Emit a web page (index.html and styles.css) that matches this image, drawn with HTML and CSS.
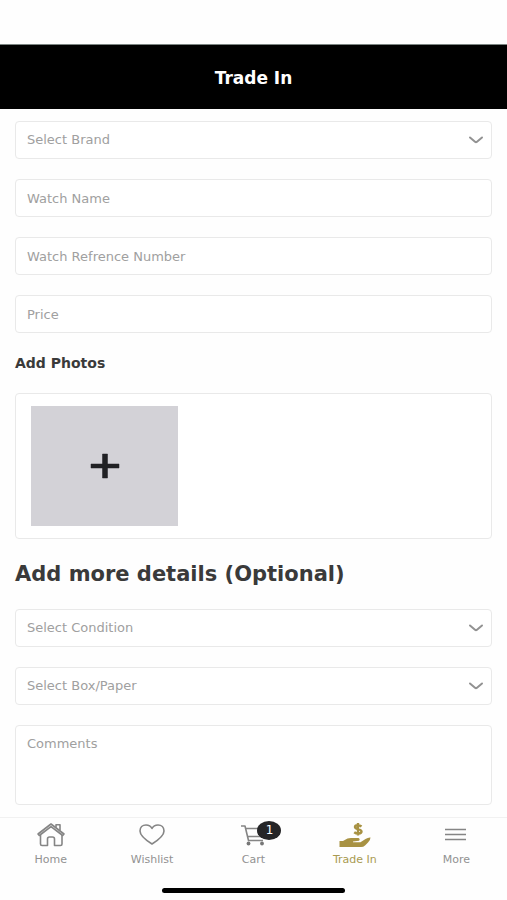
FILE: index.html
```html
<!DOCTYPE html>
<html lang="en">
<head>
<meta charset="utf-8">
<meta name="viewport" content="width=device-width, initial-scale=1">
<title>Trade In</title>
<link rel="stylesheet" href="styles.css">
</head>
<body>
<div class="app">
  <header class="header"><h1 class="header-title">Trade In</h1></header>
  <main class="content">
    <form class="form">
      <div class="group">
        <div class="select-wrap">
          <select class="field" aria-label="Select Brand"><option>Select Brand</option></select>
          <svg class="chevron" viewBox="0 0 16 8" aria-hidden="true"><path d="M2 1.500 L7 5.700 Q8 6.500 9 5.700 L14 1.500"/></svg>
        </div>
        <input class="field" type="text" placeholder="Watch Name" aria-label="Watch Name">
        <input class="field" type="text" placeholder="Watch Refrence Number" aria-label="Watch Refrence Number">
        <input class="field" type="text" placeholder="Price" aria-label="Price">
      </div>
      <h2 class="photos-title">Add Photos</h2>
      <div class="photos">
        <button class="add-photo" type="button" aria-label="Add photo">
          <svg class="plus" viewBox="0 0 30 26" aria-hidden="true"><path class="plus-bar" d="M1 11H29V15H1Z"/><path class="plus-stem" d="M12.500 1H17.500V25H12.500Z"/></svg>
        </button>
      </div>
      <h2 class="details-title">Add more details (Optional)</h2>
      <div class="group">
        <div class="select-wrap">
          <select class="field" aria-label="Select Condition"><option>Select Condition</option></select>
          <svg class="chevron" viewBox="0 0 16 8" aria-hidden="true"><path d="M2 1.500 L7 5.700 Q8 6.500 9 5.700 L14 1.500"/></svg>
        </div>
        <div class="select-wrap">
          <select class="field" aria-label="Select Box/Paper"><option>Select Box/Paper</option></select>
          <svg class="chevron" viewBox="0 0 16 8" aria-hidden="true"><path d="M2 1.500 L7 5.700 Q8 6.500 9 5.700 L14 1.500"/></svg>
        </div>
        <textarea class="field comments" placeholder="Comments" aria-label="Comments"></textarea>
      </div>
    </form>
  </main>
  <footer class="footer">
    <nav class="tabs">
      <a class="tab" href="#home">
        <svg class="icon" viewBox="0 0 32 26" aria-hidden="true"><path d="M3 12 L16 2 L29 12 L27.700 13.500 L16 4.600 L4.300 13.500 Z"/><path d="M5.500 13V22Q5.500 23.500 7 23.500H12.500V17Q12.500 15 14.500 15H17.500Q19.500 15 19.500 17V23.500H25.500Q27 23.500 27 22V13M21 5.500V2.700H25V8.600"/></svg>
        <span>Home</span>
      </a>
      <a class="tab" href="#wishlist">
        <svg class="icon" viewBox="0 0 32 26" aria-hidden="true"><path class="heart" d="M16 22 C12 19.500 4 14 4 9 C4 5.500 6.500 3 10 3 C13 3 15 4.500 16 6.500 C17 4.500 19 3 22 3 C25.500 3 28 5.500 28 9 C28 14 20 19.500 16 22Z"/></svg>
        <span>Wishlist</span>
      </a>
      <a class="tab" href="#cart">
        <span class="cart">
          <svg class="icon" viewBox="0 0 32 26" aria-hidden="true"><path d="M4 4H8L11.500 18.500H26M8.500 6.500H28L26.500 14.500H10.700"/><circle class="wheel" cx="11.500" cy="21.500" r="1.900"/><circle class="wheel" cx="25" cy="21.500" r="1.900"/></svg>
          <span class="badge">1</span>
        </span>
        <span>Cart</span>
      </a>
      <a class="tab tab-active" href="#trade-in" aria-current="page">
        <svg class="icon" viewBox="0 0 32 26" aria-hidden="true"><path class="dollar" d="M22.500 4.500C20.500 2.800 16 2.600 16 5C16 7.700 22.500 6.500 22.500 9.500C22.500 12.200 17.500 12 15.200 10.200M19 1V13.500"/><path class="hand" d="M.5 19H4L8.500 16.500Q10 16 12 16H19.500Q21.500 17 20 18.700L14 19.500V20.300H21.500L26.500 17Q29 15.300 31.500 15.500Q31.500 18 29 20.500L26 23.500Q24.500 25 22 25H.5Z"/></svg>
        <span>Trade In</span>
      </a>
      <a class="tab" href="#more">
        <svg class="icon" viewBox="0 0 32 26" aria-hidden="true"><path class="lines" d="M5 7.500H26M5 12.500H26M5 17.500H26"/></svg>
        <span>More</span>
      </a>
    </nav>
    <div class="home-indicator"></div>
  </footer>
</div>
</body>
</html>
```
FILE: styles.css
```css
* {
  box-sizing: border-box;
}

body {
  margin: 0;
  background: #fefefe;
  color: #3a3a3a;
  font-family: "DejaVu Sans", sans-serif;
}

.app {
  display: flex;
  flex-direction: column;
  min-height: 100vh;
  padding-top: 44px;
}

.header {
  display: flex;
  align-items: center;
  justify-content: center;
  padding: 21px 16px 19px;
  border-top: 1px solid #7b8481;
  background: #000;
}

.header-title {
  margin: 0;
  color: #fff;
  font-size: 17px;
  line-height: 24px;
  font-weight: 700;
}

.content {
  flex: 1;
  padding: 12px 15px;
}

.group {
  display: flex;
  flex-direction: column;
  gap: 20px;
}

.select-wrap {
  display: flex;
  position: relative;
}

.field {
  display: block;
  width: 100%;
  height: 38px;
  margin: 0;
  padding: 0 11px;
  border: 1px solid #e9e9e9;
  border-radius: 4px;
  outline: none;
  appearance: none;
  background: #fff;
  color: #a0a0a0;
  font: 400 13px/20px "DejaVu Sans", sans-serif;
}

.field::placeholder {
  color: #a0a0a0;
  opacity: 1;
}

.comments {
  height: 80px;
  padding: 8px 11px;
  resize: none;
}

.chevron {
  position: absolute;
  top: 15px;
  right: 8px;
  width: 16px;
  height: 8px;
  fill: none;
  stroke: #929292;
  stroke-width: 2;
  stroke-linecap: round;
  pointer-events: none;
}

.photos-title {
  margin: 20px 0;
  font-size: 14px;
  line-height: 20px;
  font-weight: 700;
}

.photos {
  display: flex;
  padding: 12px 15px;
  border: 1px solid #e9e9e9;
  border-radius: 4px;
  background: #fff;
}

.add-photo {
  display: grid;
  place-items: center;
  width: 147px;
  height: 120px;
  padding: 0;
  border: 0;
  background: #d3d2d7;
}

.plus {
  width: 30px;
  height: 26px;
  fill: #202124;
  stroke: #202124;
  stroke-width: 0.5;
  stroke-linejoin: round;
}

.details-title {
  margin: 20px 0;
  font-size: 21px;
  line-height: 30px;
  font-weight: 700;
}

.footer {
  padding-bottom: 8px;
  border-top: 1px solid #f1f1f1;
}

.tabs {
  display: grid;
  grid-template-columns: repeat(5, 1fr);
  padding: 4px 0 20px;
}

.tab {
  display: flex;
  flex-direction: column;
  align-items: center;
  gap: 4px;
  color: #929292;
  font-size: 11px;
  line-height: 16px;
  text-decoration: none;
}

.tab-active {
  color: #a99a50;
}

.icon {
  display: block;
  width: 32px;
  height: 26px;
  fill: none;
  stroke: #858585;
  stroke-width: 1.6;
  stroke-linejoin: round;
}

.wheel {
  fill: #777;
  stroke: none;
}

.dollar {
  stroke: #a89243;
  stroke-width: 2.4;
}

.hand {
  fill: #a89243;
  stroke: none;
}

.cart {
  position: relative;
}

.badge {
  position: absolute;
  top: -1px;
  left: 20px;
  width: 24px;
  height: 19px;
  border-radius: 50%;
  background: #252527;
  color: #fff;
  font-size: 12px;
  line-height: 19px;
  text-align: center;
}

.home-indicator {
  width: 36%;
  height: 5px;
  margin: 0 auto;
  border-radius: 3px;
  background: #000;
}
```
